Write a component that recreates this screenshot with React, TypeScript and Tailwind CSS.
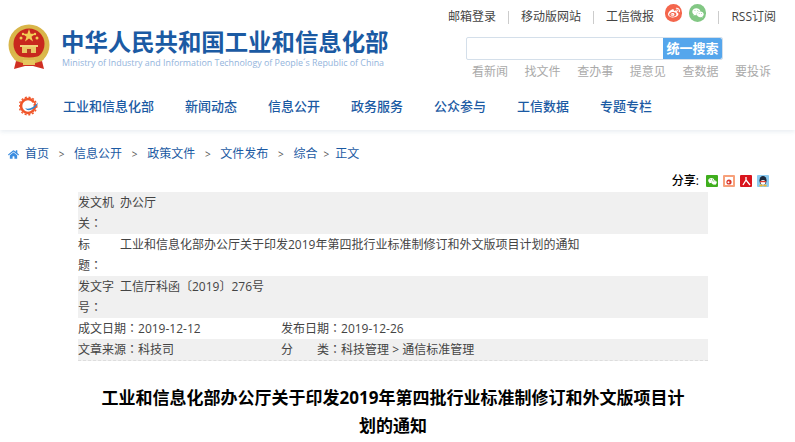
import { FaWeibo, FaWeixin, FaHome } from "react-icons/fa";

const font = { fontFamily: '"Open Sans", "Noto Sans CJK SC", sans-serif' };

const topLinks = ["看新闻", "找文件", "查办事", "提意见", "查数据", "要投诉"];
const navItems = ["工业和信息化部", "新闻动态", "信息公开", "政务服务", "公众参与", "工信数据", "专题专栏"];

function Seal() {
  return (
    <svg width="42" height="46" viewBox="0 0 42 46" className="shrink-0">
      <circle cx="21" cy="21" r="20.5" fill="#d9b64a" />
      <circle cx="21" cy="20" r="15.5" fill="#c8281e" />
      <polygon points="21,5 22.6,9.8 27.6,9.8 23.5,12.8 25,17.5 21,14.6 17,17.5 18.5,12.8 14.4,9.8 19.4,9.8" fill="#f2cd55" />
      <circle cx="13" cy="14" r="1.5" fill="#f2cd55" />
      <circle cx="29" cy="14" r="1.5" fill="#f2cd55" />
      <circle cx="15" cy="10" r="1.2" fill="#f2cd55" />
      <circle cx="27" cy="10" r="1.2" fill="#f2cd55" />
      <rect x="12" y="21" width="18" height="2" fill="#f0d27a" />
      <rect x="14" y="23" width="14" height="6" fill="#e9c763" />
      <rect x="19" y="25" width="4" height="4" fill="#b93a24" />
      <path d="M4 29 Q21 38 38 29 L35 36 Q21 42 7 36 Z" fill="#dcb94e" />
      <path d="M8 37 Q21 42 34 37 L36 45 L25 42 L17 42 L6 45 Z" fill="#cf2f22" />
      <rect x="15" y="36" width="12" height="5" fill="#e6c65e" />
    </svg>
  );
}

function NavMark() {
  return (
    <svg width="20" height="20" viewBox="0 0 20 20" className="shrink-0">
      <circle cx="9" cy="10" r="7" fill="none" stroke="#f0562a" strokeWidth="2.6" />
      <circle cx="9" cy="10" r="8.8" fill="none" stroke="#f0562a" strokeWidth="1.4" strokeDasharray="2 1.8" />
      <path d="M6 12 C10 14 15 11 19 6.500 C18 11 13 15 8 14 Z" fill="#2f86cf" />
      <path d="M7 10 C10 11 13 9 15 7" fill="none" stroke="#ffffff" strokeWidth="1.4" />
    </svg>
  );
}

function Divider() {
  return <span className="mx-3 h-[13px] w-px bg-[#cccccc]" />;
}

function Crumb() {
  return <span className="mx-[9.700px] text-[10px] text-[#555555]">&gt;</span>;
}

// the reference's full-width colon sits in the middle of its cell, as in the TC face
function Colon() {
  return <span className="font-['Noto_Sans_CJK_TC'] leading-none">：</span>;
}

function ShareIcons() {
  return (
    <div className="flex items-center gap-[5px]">
      <span className="flex size-3 items-center justify-center rounded-[1px] bg-[#3fae1d] text-white">
        <FaWeixin size={9} />
      </span>
      <span className="flex size-3 items-center justify-center rounded-[1px] bg-[#f7a07a]">
        <svg width="10" height="10" viewBox="0 0 10 10">
          <rect x="1" y="1" width="8" height="8" fill="#fff" />
          <circle cx="5" cy="6" r="2.6" fill="#d8342a" />
          <circle cx="4.500" cy="6.200" r="1" fill="#fff" />
        </svg>
      </span>
      <span className="flex size-3 items-center justify-center rounded-[1px] bg-[#d9141c]">
        <svg width="10" height="10" viewBox="0 0 10 10">
          <path d="M5 1 L5 4 L2 9 M5 4 L9 9" fill="none" stroke="#fff" strokeWidth="1.3" />
        </svg>
      </span>
      <span className="flex size-3 items-center justify-center rounded-[1px] bg-[#8ccbf0]">
        <svg width="12" height="12" viewBox="0 0 12 12">
          <ellipse cx="6" cy="5.500" rx="3.600" ry="4.600" fill="#1d2a3d" />
          <ellipse cx="6" cy="7.500" rx="2.400" ry="2.400" fill="#ffffff" />
          <rect x="3" y="6" width="6" height="1.200" fill="#e0392b" />
          <ellipse cx="4" cy="10.500" rx="1.800" ry="0.900" fill="#f4b62c" />
          <ellipse cx="8" cy="10.500" rx="1.800" ry="0.900" fill="#f4b62c" />
        </svg>
      </span>
    </div>
  );
}

function Row({ label, tail, value, gray }: { label: string; tail: string; value: string; gray?: boolean }) {
  return (
    <div className={`flex leading-[21px] ${gray ? "bg-[#f0f0f0]" : ""}`}>
      <div className="w-[42px] shrink-0">
        {label}
        {tail}
        <Colon />
      </div>
      <div>{value}</div>
    </div>
  );
}

export default function App() {
  return (
    <div className="h-[442px] w-[795px] overflow-hidden bg-white" style={font}>
      {/* header */}
      <div className="h-[130px] shadow-[0_2px_4px_rgba(220,228,235,0.6)]">
        <div className="flex justify-between">
          <div className="flex items-start pl-2 pt-6">
            <Seal />
            <div className="ml-3 pt-[1px]">
              <div className="-ml-[1px] font-['Noto_Sans_CJK_SC'] text-[23.400px] leading-[32px] font-bold whitespace-nowrap text-[#1b5aa3]">
                中华人民共和国工业和信息化部
              </div>
              <div className="text-[8.900px] leading-[12px] whitespace-nowrap text-[#93b4dc]">
                Ministry of Industry and Information Technology of People´s Republic of China
              </div>
            </div>
          </div>

          <div className="flex w-[347px] shrink-0 flex-col pr-[19px] whitespace-nowrap">
            <div className="flex h-[34px] items-center justify-end text-xs text-[#444444]">
              <span>邮箱登录</span>
              <Divider />
              <span>移动版网站</span>
              <Divider />
              <span>工信微报</span>
              <span className="ml-[11px] flex size-[18px] -translate-y-1 items-center justify-center rounded-full bg-[#f4664c] text-white">
                <FaWeibo size={12} />
              </span>
              <span className="ml-[7px] flex size-[18px] -translate-y-1 items-center justify-center rounded-full bg-[#82c784] text-white">
                <FaWeixin size={12} />
              </span>
              <Divider />
              <span className="w-[46px]">RSS订阅</span>
            </div>
            <div className="mt-[3px] ml-[18px] flex h-[23px] w-[257px] rounded-[2px] border border-[#d4dfea]">
              <div className="flex-1" />
              <div className="flex w-[59px] items-center justify-center rounded-r-[2px] bg-[#55a6ec] text-[13px] font-bold text-white">
                统一搜索
              </div>
            </div>
            <div className="mt-[3px] ml-[24px] flex w-[299px] justify-between text-xs leading-[18px] text-[#aaaaaa]">
              {topLinks.map((t) => (
                <span key={t}>{t}</span>
              ))}
            </div>
          </div>
        </div>

        <div className="mt-[15px] flex items-center pl-[19px]">
          <NavMark />
          <div className="ml-[24px] flex gap-[31px] text-[13px] leading-[20px] font-medium text-[#1b5aa3]">
            {navItems.map((t) => (
              <span key={t}>{t}</span>
            ))}
          </div>
        </div>
      </div>

      {/* breadcrumb */}
      <div className="mt-[15px] flex items-center pl-2 text-xs leading-[18px] text-[#1b5aa3]">
        <FaHome size={11} className="text-[#3c8de0]" />
        <span className="ml-[6px]">首页</span>
        <Crumb />
        <span>信息公开</span>
        <Crumb />
        <span>政策文件</span>
        <Crumb />
        <span>文件发布</span>
        <Crumb />
        <span>综合</span>
        <span className="mx-[6px] text-[10px] text-[#555555]">&gt;</span>
        <span>正文</span>
      </div>

      {/* share */}
      <div className="mt-[9px] flex h-[18px] items-center justify-end pr-[26px]">
        <span className="mr-[7px] text-xs font-medium text-black">分享:</span>
        <ShareIcons />
      </div>

      {/* info table */}
      <div className="mx-[78px] mt-[2px] w-[630px] text-xs text-[#444444]">
        <Row label="发文机" tail="关" value="办公厅" gray />
        <Row label="标　　" tail="题" value="工业和信息化部办公厅关于印发2019年第四批行业标准制修订和外文版项目计划的通知" />
        <Row label="发文字" tail="号" value="工信厅科函〔2019〕276号" gray />
        <div className="flex leading-[21px]">
          <div className="w-[203px]">
            成文日期
            <Colon />
            2019-12-12
          </div>
          <div>
            发布日期
            <Colon />
            2019-12-26
          </div>
        </div>
        <div className="flex border-b border-dashed border-[#dddddd] bg-[#f0f0f0] leading-[21px]">
          <div className="w-[203px]">
            文章来源
            <Colon />
            科技司
          </div>
          <div>
            分　　类
            <Colon />
            科技管理 &gt; 通信标准管理
          </div>
        </div>
      </div>

      {/* title */}
      <h1 className="mt-[23px] ml-[98px] w-[590px] text-center text-[17px] leading-[28px] font-bold text-black">
        工业和信息化部办公厅关于印发2019年第四批行业标准制修订和外文版项目计划的通知
      </h1>
    </div>
  );
}
